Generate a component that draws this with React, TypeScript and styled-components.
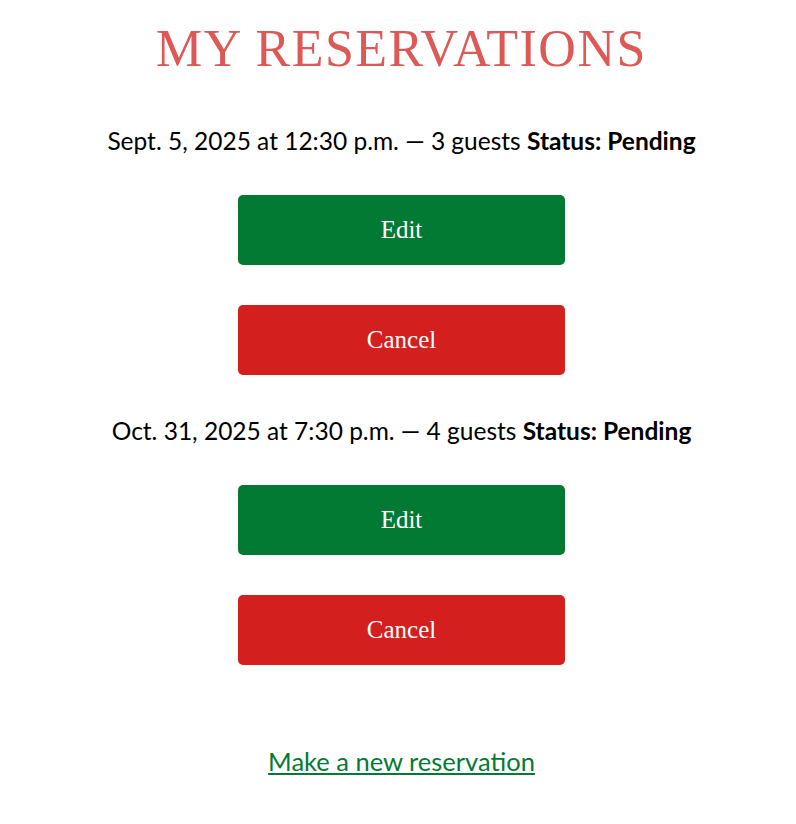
import React from "react";
import styled, { createGlobalStyle } from "styled-components";

const Global = createGlobalStyle`
  html, body { margin: 0; padding: 0; background: #ffffff; }
  body { font-family: "Lato", "Noto Sans", sans-serif; color: #000; }
`;

const Page = styled.main`
  display: flex;
  flex-direction: column;
  align-items: center;
  padding: 21px 0 0 7px;
`;

const Title = styled.h1`
  margin: 0 0 50px;
  font-family: "Liberation Serif", "DejaVu Serif", serif;
  font-weight: 400;
  font-size: 52px;
  line-height: 56px;
  letter-spacing: 1.5px;
  color: #dc5956;
`;

const Reservation = styled.section`
  display: flex;
  flex-direction: column;
  align-items: center;
  gap: 40px;
  margin-bottom: 42px;
`;

const Line = styled.p`
  margin: 0;
  font-size: 24.5px;
  line-height: 28px;
  text-align: center;
`;

const Strong = styled.strong`
  font-weight: 700;
`;

const Button = styled.button<{ $variant: "edit" | "cancel" }>`
  width: 327px;
  height: 70px;
  border: none;
  border-radius: 5px;
  background: ${(p) => (p.$variant === "edit" ? "#037a33" : "#d41f1f")};
  color: #ffffff;
  font-family: "Liberation Serif", "DejaVu Serif", serif;
  font-size: 25px;
  cursor: pointer;
`;

const Footer = styled.p`
  margin: 40px 0 0;
  font-size: 25.5px;
  line-height: 28px;
  text-align: center;
`;

const NewLink = styled.a`
  color: #037a33;
  text-decoration: underline;
`;

const reservations = [
  { date: "Sept. 5, 2025 at 12:30 p.m.", guests: 3 },
  { date: "Oct. 31, 2025 at 7:30 p.m.", guests: 4 },
];

export default function App() {
  return (
    <>
      <Global />
      <Page>
        <Title>MY RESERVATIONS</Title>
        {reservations.map((r) => (
          <Reservation key={r.date}>
            <Line>
              {r.date} — {r.guests} guests <Strong>Status: Pending</Strong>
            </Line>
            <Button $variant="edit">Edit</Button>
            <Button $variant="cancel">Cancel</Button>
          </Reservation>
        ))}
        <Footer>
          <NewLink href="#">Make a new reservation</NewLink>
        </Footer>
      </Page>
    </>
  );
}
